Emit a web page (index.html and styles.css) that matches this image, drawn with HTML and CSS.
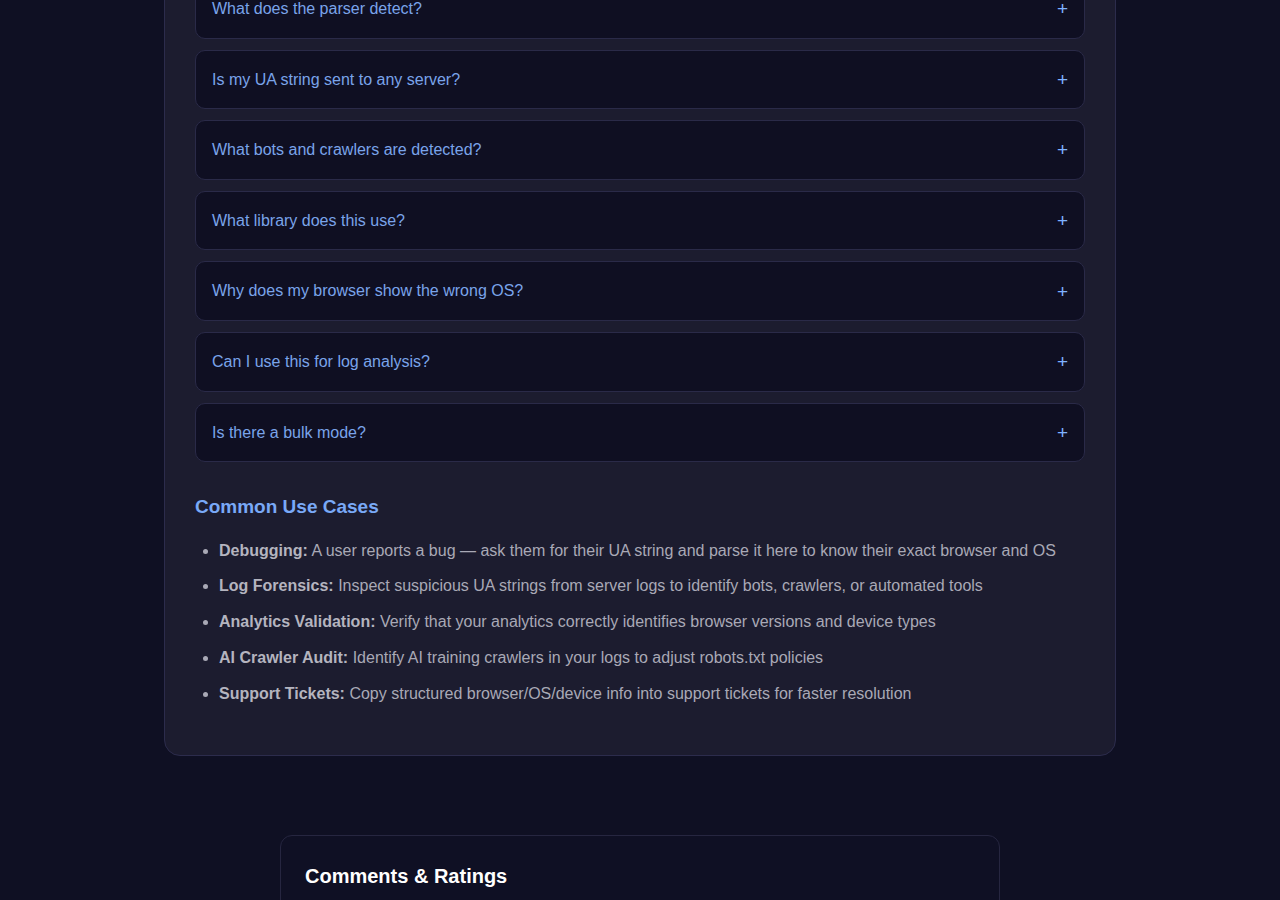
FILE: index.html
```html
<!DOCTYPE html>
<html lang="en">
<head>
  <meta charset="UTF-8" />
  <title>User Agent Parser</title>
  <link rel="stylesheet" href="styles.css">
</head>
<body>
  <section class="info-panel">
    <div class="faq-list">
      <div class="faq-item"><span>What does the parser detect?</span><span class="faq-toggle">+</span></div>
      <div class="faq-item"><span>Is my UA string sent to any server?</span><span class="faq-toggle">+</span></div>
      <div class="faq-item"><span>What bots and crawlers are detected?</span><span class="faq-toggle">+</span></div>
      <div class="faq-item"><span>What library does this use?</span><span class="faq-toggle">+</span></div>
      <div class="faq-item"><span>Why does my browser show the wrong OS?</span><span class="faq-toggle">+</span></div>
      <div class="faq-item"><span>Can I use this for log analysis?</span><span class="faq-toggle">+</span></div>
      <div class="faq-item"><span>Is there a bulk mode?</span><span class="faq-toggle">+</span></div>
    </div>

    <h3 class="section-title">Common Use Cases</h3>
    <ul class="use-cases">
      <li><strong>Debugging:</strong> A user reports a bug — ask them for their UA string and parse it here to know their exact browser and OS</li>
      <li><strong>Log Forensics:</strong> Inspect suspicious UA strings from server logs to identify bots, crawlers, or automated tools</li>
      <li><strong>Analytics Validation:</strong> Verify that your analytics correctly identifies browser versions and device types</li>
      <li><strong>AI Crawler Audit:</strong> Identify AI training crawlers in your logs to adjust robots.txt policies</li>
      <li><strong>Support Tickets:</strong> Copy structured browser/OS/device info into support tickets for faster resolution</li>
    </ul>
  </section>

  <section class="comments">
    <h2>Comments &amp; Ratings</h2>
  </section>
</body>
</html>
```

FILE: styles.css
```css
body {
  margin: 0;
  background: #0f1023;
  color: #e8e8f0;
  font-family: "Liberation Sans", Arial, sans-serif;
  font-size: 16px;
  line-height: 1.6;
}
.info-panel {
  box-sizing: border-box;
  width: 952px;
  margin: -52px auto 0 auto;
  padding: 30px 30px 49px 30px;
  background: #1c1c2f;
  border: 1px solid #2c2c4c;
  border-radius: 16px;
}
.faq-list {
  display: flex;
  flex-direction: column;
  gap: 11px;
}
.faq-item {
  display: flex;
  justify-content: space-between;
  align-items: center;
  padding: 16px;
  background: #0f0f22;
  border: 1px solid #2a2a48;
  border-radius: 10px;
  color: #7aa4ea;
  cursor: pointer;
}
.faq-toggle {
  color: #7fb2ff;
  font-size: 19px;
  line-height: 1;
}
.section-title {
  margin: 30px 0 15px 0;
  color: #79a9f7;
  font-size: 19px;
  line-height: 1.6;
}
.use-cases {
  margin: 0;
  padding-left: 24px;
  color: #a9a9b6;
}
.use-cases li {
  margin-bottom: 10.2px;
}
.use-cases li:last-child {
  margin-bottom: 0;
}
.use-cases strong {
  color: #b4b4bf;
}
.comments {
  box-sizing: border-box;
  width: 720px;
  margin: 79px auto 0 auto;
  padding: 24px;
  min-height: 200px;
  background: #0f1024;
  border: 1px solid #262640;
  border-radius: 12px;
}
.comments h2 {
  margin: 0;
  color: #ffffff;
  font-size: 20px;
  line-height: 1.6;
}
```
